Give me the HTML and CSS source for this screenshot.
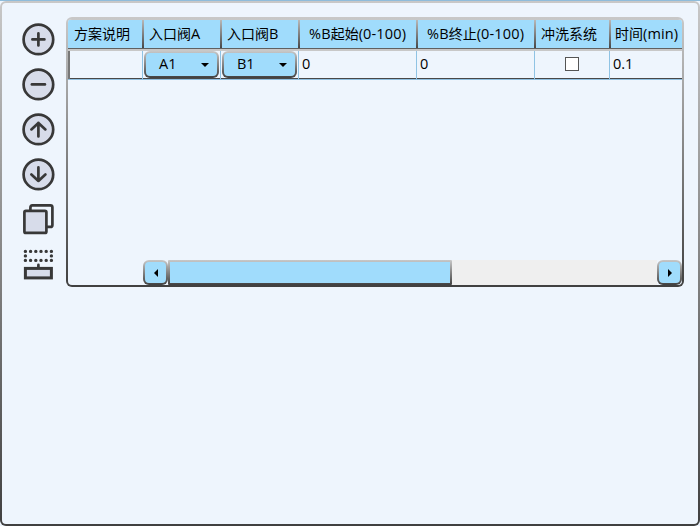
FILE: index.html
```html
<!DOCTYPE html>
<html lang="zh-CN">
<head>
<meta charset="utf-8">
<title>方案</title>
<link rel="stylesheet" href="styles.css">
</head>
<body>
<div class="frame">
<div class="panel">
  <div class="tools">
    <svg class="icon" viewBox="-0.4 -0.4 34 34"><circle cx="17" cy="17" r="14.8"/><path d="M17 11v12M11 17h12"/></svg>
    <svg class="icon" viewBox="-0.4 -0.4 34 34"><circle cx="17" cy="17" r="14.8"/><path d="M10.500 17h13"/></svg>
    <svg class="icon" viewBox="-0.4 -0.4 34 34"><circle cx="17" cy="17" r="14.8"/><path d="M17 24V10.500M10 17l7-6.500 7 6.500"/></svg>
    <svg class="icon" viewBox="-0.4 -0.4 34 34"><circle cx="17" cy="17" r="14.8"/><path d="M17 10v13.500M10 17l7 6.500 7-6.500"/></svg>
    <svg class="icon" viewBox="-0.4 -0.4 34 34"><path d="M9 8V5.500Q9 3 11 3H29Q31 3 31 5V22.500Q31 24.500 29 24.500H26"/><rect x="3" y="8.500" width="22" height="22" rx="1.500"/></svg>
    <svg class="icon" viewBox="-0.4 -0.4 34 34"><path class="dots" d="M4 4h0M9.200 4h0M14.400 4h0M19.600 4h0M24.800 4h0M30 4h0M4 8.500h0M30 8.500h0M4 13h0M9.200 13h0M14.400 13h0M19.600 13h0M24.800 13h0M30 13h0"/><path d="M17 17.500v3"/><rect class="box" x="4" y="21" width="26" height="9.500"/></svg>
  </div>
  <div class="grid-frame">
  <div class="grid">
    <div class="row head">
      <div class="th">方案说明</div>
      <div class="th">入口阀<span>A</span></div>
      <div class="th">入口阀<span>B</span></div>
      <div class="th wide"><span>%B</span>起始<span>(0-100)</span></div>
      <div class="th wide"><span>%B</span>终止<span>(0-100)</span></div>
      <div class="th">冲洗系统</div>
      <div class="th last">时间<span>(min)</span></div>
    </div>
    <div class="row data">
      <div class="td first"></div>
      <div class="td pick"><div class="btn combo"><div class="face"><span>A1</span><i class="down"></i></div></div></div>
      <div class="td pick"><div class="btn combo"><div class="face"><span>B1</span><i class="down"></i></div></div></div>
      <div class="td">0</div>
      <div class="td">0</div>
      <div class="td center"><span class="check"></span></div>
      <div class="td last">0.1</div>
    </div>
    <div class="space"></div>
    <div class="scroll">
      <div class="btn arrow"><div class="face"><i class="left"></i></div></div>
      <div class="thumb"><div class="thumb-face"></div></div>
      <div class="track"></div>
      <div class="btn arrow"><div class="face"><i class="right"></i></div></div>
    </div>
  </div>
  </div>
</div>
</div>
</body>
</html>
```
FILE: styles.css
```css
* { box-sizing: border-box; }
body {
  margin: 0;
  width: 700px;
  height: 526px;
  border-top: 1px solid #8fbcdb;
  background: #eef5fd;
  font: 14.5px/20px "Open Sans", "Noto Sans CJK SC", sans-serif;
  color: #000;
  overflow: hidden;
}
.frame {
  height: 525px;
  padding: 2px;
  border-radius: 6px;
  background: linear-gradient(#c8c8c8, #404040);
}
.panel {
  display: flex;
  height: 521px;
  padding: 14px 14px 0 20px;
  border-radius: 4px;
  background: #eef5fd;
}
.tools {
  display: flex;
  flex-direction: column;
  gap: 11px;
  width: 44px;
  padding-top: 5px;
}
.icon {
  width: 34px;
  height: 34px;
  margin-left: -1px;
  fill: #d7dcea;
  stroke: #383838;
  stroke-width: 2.7;
  stroke-linecap: round;
  stroke-linejoin: round;
}
.icon path { fill: none; }
.icon .dots { stroke-width: 3.4; }
.icon .box { stroke-width: 3; stroke-linejoin: miter; }
.grid-frame {
  width: 618px;
  height: 270px;
  padding: 2px;
  border-radius: 6px;
  background: linear-gradient(#c8c8c8, #404040);
}
.grid {
  display: flex;
  flex-direction: column;
  height: 266px;
  border-radius: 4px;
  background: #eef5fd;
  overflow: hidden;
}
.row { display: grid; flex: none; }
.head {
  grid-template-columns: 76px 78px 78px 118px 118px 75px 71px;
  height: 32px;
  padding: 1px 0 3px;
  background: linear-gradient(#c8c8c8 0 1px, #a0dcfc 1px 29px, #606060 29px 30px, #c8c8c8 30px);
}
.th {
  padding: 4px 0 0 5px;
  background: linear-gradient(#b8b8b8, #484848) right / 2px 100% no-repeat;
  font-size: 14px;
  line-height: 20px;
  white-space: nowrap;
}
.th span { font-size: 14.5px; letter-spacing: 0.15px; }
.th:first-child { padding-left: 6px; }
.th.wide { padding-left: 9px; }
.th.last { padding-left: 4px; background: none; }
.data {
  grid-template-columns: 75px 78px 78px 118px 118px 75px 73px;
  height: 29px;
  background: linear-gradient(#484848, #484848) 0 27px / 100% 1px no-repeat,
    linear-gradient(#8fbfe0, #8fbfe0) 0 28px / 100% 1px no-repeat;
}
.td {
  height: 28px;
  padding: 3px 0 0 3px;
  border-right: 1px solid #8fc3e4;
}
.td.first { border-left: 2px solid #777; }
.td.last { border-right: 0; }
.td.pick { padding: 0 0 0 1px; }
.td.center { display: flex; justify-content: center; padding: 6px 0 0; }
.check {
  width: 14px;
  height: 14px;
  border: 1px solid #555;
  background: #fff;
}
.btn {
  padding: 2px;
  border-radius: 6px;
  background: linear-gradient(#c8c8c8, #404040);
}
.combo { width: 75px; height: 27px; }
.face {
  display: flex;
  align-items: center;
  justify-content: center;
  height: 100%;
  border-radius: 4px;
  background: #a0dcfc;
}
.combo .face { justify-content: space-between; padding: 0 8px 0 13px; }
.combo span { padding-bottom: 2px; }
.down { border: 4.5px solid transparent; border-top: 4.5px solid #000; border-bottom: 0; }
.left { border: 4px solid transparent; border-right-color: #000; border-left: 0; }
.right { border: 4px solid transparent; border-left-color: #000; border-right: 0; }
.space { flex: 1; }
.scroll {
  display: flex;
  flex: none;
  height: 25px;
  padding-left: 75px;
}
.arrow { width: 25px; height: 25px; }
.thumb {
  width: 284px;
  padding: 2px;
  border-radius: 1px;
  background: linear-gradient(#c8c8c8, #404040);
}
.thumb-face { height: 100%; background: #a0dcfc; }
.track { flex: 1; background: #efefef; }
```
